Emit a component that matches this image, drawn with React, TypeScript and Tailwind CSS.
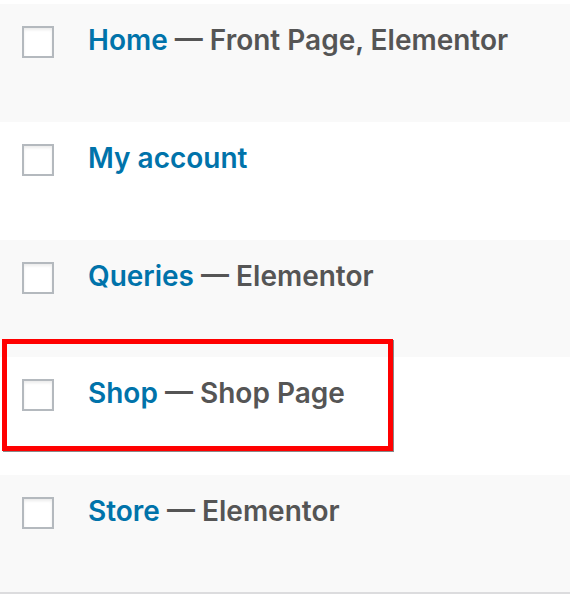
import React from "react";

type Row = { title: string; state?: string; bg: string; h: string };

const rows: Row[] = [
  { title: "Home", state: "Front Page, Elementor", bg: "bg-[#f9f9f9]", h: "h-[118px]" },
  { title: "My account", bg: "bg-white", h: "h-[118px]" },
  { title: "Queries", state: "Elementor", bg: "bg-[#f9f9f9]", h: "h-[117px]" },
  { title: "Shop", state: "Shop Page", bg: "bg-white", h: "h-[118px]" },
  { title: "Store", state: "Elementor", bg: "bg-[#f9f9f9]", h: "h-[117px]" },
];

export default function App() {
  return (
    <div
      className="relative w-[570px] h-[594px] bg-white overflow-hidden"
      style={{ fontFamily: "Inter, 'Noto Sans', 'Liberation Sans', sans-serif" }}
    >
      <div className="h-[4px] bg-white" />
      {rows.map((r) => (
        <div key={r.title} className={`${r.bg} ${r.h} flex items-start pt-[22px]`}>
          <div className="ml-[22px] w-[32px] h-[32px] border-2 border-[#b4b9be] bg-white shadow-[inset_0_2px_3px_rgba(0,0,0,0.08)] shrink-0" />
          <div className="ml-[34px] -mt-[6px] text-[28px] font-semibold leading-[40px] whitespace-nowrap">
            <span className="text-[#0073aa]">{r.title}</span>
            {r.state && <span className="text-[#555555]"> — {r.state}</span>}
          </div>
        </div>
      ))}
      <div className="h-[2px] bg-[#dcdcde]" />
      <div className="absolute left-[2px] top-[339px] w-[391px] h-[112px] border-[5px] border-[#ff0000] shadow-[1px_1px_0_#888888]" />
    </div>
  );
}
